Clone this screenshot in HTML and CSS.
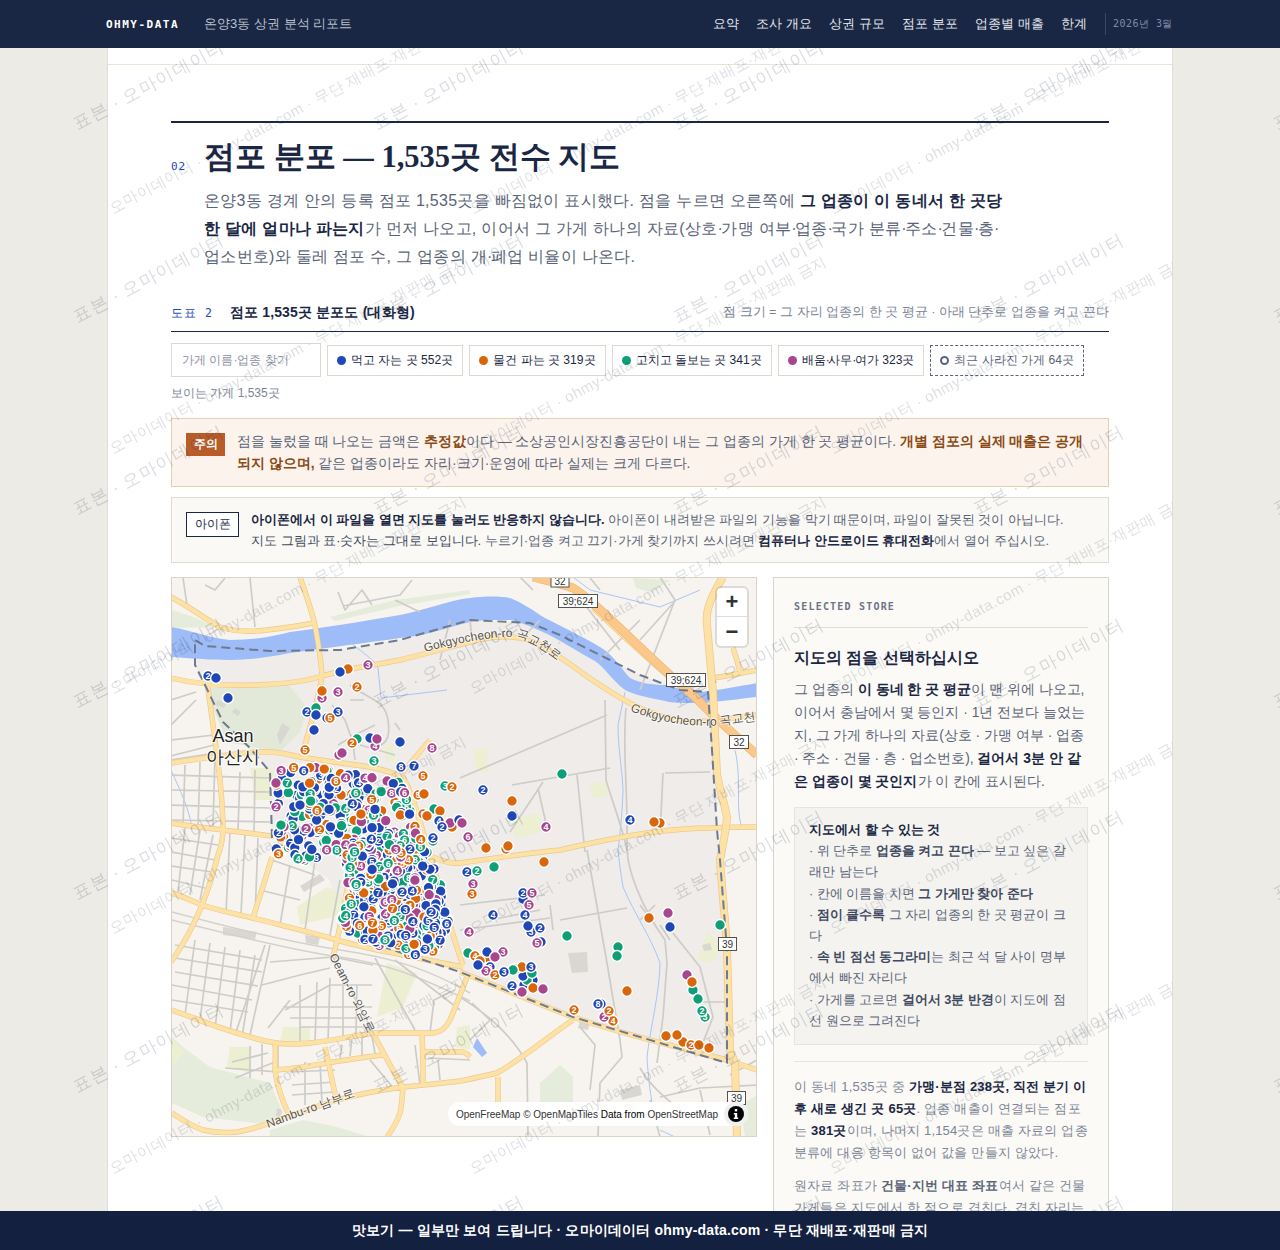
FILE: index.html
```html
<!DOCTYPE html>
<html lang="ko">
<head>
  <meta charset="UTF-8" />
  <meta name="viewport" content="width=device-width, initial-scale=1.0"/>
  <title>온양3동 상권 분석 리포트 - 점포 분포</title>
  <link rel="stylesheet" href="styles.css">
</head>
<body>
  <div class="topbar">
    <div class="topbar-left">
      <span class="brand">OHMY-DATA</span>
      <span class="report-name">온양3동 상권 분석 리포트</span>
    </div>
    <div class="topbar-right">
      <a href="#">요약</a>
      <a href="#">조사 개요</a>
      <a href="#">상권 규모</a>
      <a href="#">점포 분포</a>
      <a href="#">업종별 매출</a>
      <a href="#">한계</a>
      <span class="report-date">2026년 3월</span>
    </div>
  </div>

  <div class="watermark" id="wmOuter"></div>

  <div class="sheet">
    <div class="prev-end"></div>

    <div class="section">
      <div class="section-head">
        <span class="section-num">02</span>
        <h1>점포 분포 — 1,535곳 전수 지도</h1>
      </div>
      <p class="lead">온양3동 경계 안의 등록 점포 1,535곳을 빠짐없이 표시했다. 점을 누르면 오른쪽에 <strong>그 업종이 이 동네서 한 곳당 한 달에 얼마나 파는지</strong>가 먼저 나오고, 이어서 그 가게 하나의 자료(상호<i class="mid">·</i>가맹 여부<i class="mid">·</i>업종<i class="mid">·</i>국가 분류<i class="mid">·</i>주소<i class="mid">·</i>건물<i class="mid">·</i>층<i class="mid">·</i>업소번호)와 둘레 점포 수, 그 업종의 개<i class="mid">·</i>폐업 비율이 나온다.</p>

      <div class="fig-head">
        <div class="fig-title"><span class="fig-num">도표 2</span><strong>점포 1,535곳 분포도 (대화형)</strong></div>
        <div class="fig-note">점 크기 = 그 자리 업종의 한 곳 평균 · 아래 단추로 업종을 켜고 끈다</div>
      </div>

      <div class="filters">
        <input class="search" type="text" placeholder="가게 이름·업종 찾기">
        <button class="chip"><i class="dot dot-blue"></i>먹고 자는 곳 552곳</button>
        <button class="chip"><i class="dot dot-orange"></i>물건 파는 곳 319곳</button>
        <button class="chip"><i class="dot dot-green"></i>고치고 돌보는 곳 341곳</button>
        <button class="chip"><i class="dot dot-purple"></i>배움<i class="mid">·</i>사무<i class="mid">·</i>여가 323곳</button>
        <button class="chip chip-closed"><i class="dot dot-ring"></i>최근 사라진 가게 64곳</button>
      </div>
      <div class="count">보이는 가게 1,535곳</div>

      <div class="notice notice-warn">
        <span class="notice-tag">주의</span>
        <p>점을 눌렀을 때 나오는 금액은 <b>추정값</b>이다 — 소상공인시장진흥공단이 내는 그 업종의 가게 한 곳 평균이다. <b>개별 점포의 실제 매출은 공개되지 않으며,</b> 같은 업종이라도 자리·크기·운영에 따라 실제는 크게 다르다.</p>
      </div>
      <div class="notice notice-phone">
        <span class="notice-tag">아이폰</span>
        <p><strong>아이폰에서 이 파일을 열면 지도를 눌러도 반응하지 않습니다.</strong> 아이폰이 내려받은 파일의 기능을 막기 때문이며, 파일이 잘못된 것이 아닙니다.<br><span class="dim">지도 그림과 표·숫자는 그대로 보입니다.</span> 누르기·업종 켜고 끄기·가게 찾기까지 쓰시려면 <strong>컴퓨터나 안드로이드 휴대전화</strong>에서 열어 주십시오.</p>
      </div>

      <div class="map-row">
        <div class="map">
          <svg class="map-svg" viewBox="171 577 586 560" xmlns="http://www.w3.org/2000/svg">
            <defs>
              <path id="majors" d="M171 678C195 684 225 686 255 685C285 684 305 682 322 676C350 668 375 665 400 660C425 654 450 647 470 642C485 638 500 636 512 637C528 638 540 644 552 652C570 663 585 676 600 685C615 695 628 703 642 709C660 716 675 721 690 722C712 722 735 717 757 715
                M300 577C305 592 311 608 315 625C318 642 321 658 322 676C318 700 311 725 302 755
                M171 597C190 607 205 619 220 627C235 632 250 632 267 630C285 628 300 626 313 623
                M207 682C211 710 216 745 220 780C222 800 223 815 223 832C222 845 220 850 218 855C213 875 208 890 202 905C194 925 183 945 171 962
                M171 763C200 759 230 754 257 752C272 751 288 754 300 757C325 761 350 764 370 767C385 770 395 773 403 778C412 790 422 830 430 855C438 880 450 930 463 965
                M171 823C190 826 206 828 223 830C240 832 255 834 272 836
                M172 893C182 896 192 901 202 905C220 911 236 914 253 918C280 925 310 932 337 940C350 944 365 947 377 950C405 955 435 962 463 967
                M272 857C266 878 259 898 253 918
                M348 883C345 905 341 922 337 940C336 946 334 952 333 957
                M172 1010C195 1018 215 1027 237 1033C250 1037 262 1041 277 1043C288 1045 298 1044 310 1043C332 1041 352 1036 373 1033C392 1033 412 1033 433 1033C442 1032 446 1027 450 1020C456 1006 462 990 467 977
                M373 1033C382 1050 392 1070 403 1087
                M275 1045C276 1053 275 1062 275 1070C277 1086 282 1100 288 1113
                M275 1070C292 1069 309 1066 327 1063C346 1060 365 1057 383 1055
                M325 1047C329 1066 333 1085 337 1103
                M422 1035C423 1050 423 1065 423 1083
                M423 1052C435 1052 450 1052 463 1052C466 1053 468 1055 470 1057
                M172 1113C182 1120 192 1126 203 1130C215 1133 226 1133 237 1132C248 1130 259 1127 270 1123C292 1115 315 1107 337 1100C359 1094 381 1090 403 1087C425 1085 445 1083 460 1081C475 1078 488 1075 497 1073C525 1057 550 1035 573 1020
                M403 1087C402 1097 402 1105 400 1113C397 1122 392 1130 387 1137
                M498 1077L498 1103
                M733 648C736 656 738 664 740 672
                M460 972C495 985 535 1003 573 1017C625 1035 680 1048 727 1060L757 1070
                M430 856C445 862 452 864 460 863C495 858 530 853 560 850C590 843 620 837 647 833C670 830 690 828 710 828C725 827 742 827 757 827
                M593 608C615 628 640 652 667 675
                M713 678C728 676 742 673 757 670
                M403 772C412 762 421 750 430 740"/>
              <path id="lblA" d="M425 652C455 644 485 637 510 637C530 638 548 652 568 668"/>
              <path id="lblB" d="M630 711C660 722 690 728 720 725L765 719"/>
            </defs>

            <rect x="171" y="577" width="586" height="560" class="land"/>

            <path class="green" d="M172 610L196 618L215 627L172 628Z"/>
            <path class="green" d="M330 617L395 600L470 590L470 594L400 606L335 621Z"/>
            <path class="green" d="M633 578L670 580L652 593L636 588Z"/>
            <path class="green" d="M172 1037L183 1047L210 1067L270 1083L283 1113L270 1125L203 1117L172 1103Z"/>
            <path class="green" d="M270 1130L303 1120L337 1127L370 1137L270 1137Z"/>
            <path class="green" d="M540 1083L560 1065L573 1077L573 1102L540 1102Z"/>
            <path class="green" d="M740 1105L757 1095L757 1137L745 1137Z"/>

            <path class="boundary-fill" d="M195 640L205 646L270 651L340 650L400 640L470 620L530 623L560 635L610 660L640 675L680 690L708 692L712 750L717 830L720 860L727 950L727 1063L573 1017L460 972L363 940L340 925L330 880L272 838L270 772L250 748L223 722L205 685L195 665Z"/>

            <path class="park" d="M210 685L287 682L307 708L300 732L280 752L257 748L227 742L213 708Z"/>
            <path class="school" d="M250 768L273 768L272 800L255 800Z"/>
            <path class="school" d="M297 907L327 887L347 897L340 915L300 925Z"/>
            <path class="school" d="M377 1017L387 963L417 973L403 1007Z"/>
            <path class="school" d="M283 1027L310 1027L310 1042L280 1042Z"/>
            <path class="school" d="M230 1047L252 1047L250 1073L227 1067Z"/>
            <path class="school" d="M457 1027L470 1025L470 1050L455 1047Z"/>
            <path class="school" d="M697 960L707 933L723 943L713 963Z"/>
            <path class="school" d="M473 750L487 748L488 772L477 772Z"/>
            <path class="school" d="M590 783L608 782L607 797L593 798Z"/>
            <path class="school" d="M512 818L540 813L542 832L515 838Z"/>
            <path class="school" d="M384 745L392 743L395 760L386 762Z"/>
            <path class="school" d="M172 1040L184 1052L172 1066Z"/>

            <path class="building" d="M568 953L587 952L588 972L572 973Z"/>
            <path class="building" d="M223 927L257 932L255 939L223 935Z"/>
            <path class="building" d="M305 935L320 937L318 945L306 943Z"/>
            <path class="building" d="M280 745L290 728L282 723L277 735Z"/>
            <path class="building" d="M217 700L226 704L224 708L216 705Z"/>
            <path class="building" d="M235 708L241 712L238 716L232 712Z"/>
            <path class="building" d="M282 1110L277 1108L276 1116L281 1117Z"/>
            <path class="building" d="M620 1090L640 1085L642 1095L622 1100Z"/>
            <path class="building" d="M580 1020L590 1022L588 1030L578 1028Z"/>
            <path class="building" d="M702 945L710 943L712 950L704 951Z"/>
            <path class="building" d="M300 886L320 874L325 880L304 892Z"/>
            <path class="building" d="M336 835L350 828L350 838L340 843Z"/>

            <path class="water" d="M171 627C190 630 210 638 230 640C255 640 275 636 290 632C320 628 360 622 400 615C425 610 450 600 470 598C485 596 500 596 510 598C525 604 535 612 545 618C565 628 585 638 600 647C615 656 622 670 630 678C640 683 652 685 665 685C680 689 690 691 700 692C720 690 740 686 757 683L757 697C740 699 720 702 700 703C685 703 672 703 665 701C650 698 635 695 625 690C612 680 605 668 595 661C578 652 560 640 545 633C530 626 520 622 510 620C495 620 480 620 470 622C445 628 425 636 400 638C365 643 325 648 290 653C270 657 250 660 230 660C205 660 190 658 171 657Z"/>
            <path class="water" d="M473 1047L477 1038L487 1053L482 1057Z"/>
            <path class="stream" d="M350 642C365 655 375 660 378 668L381 698L447 690"/>
            <path class="stream" d="M625 692L618 725C618 750 623 775 623 792C622 815 620 835 618 850C620 870 622 880 623 887C635 915 650 935 660 963C660 990 650 1030 647 1057C648 1075 650 1090 652 1103"/>
            <path class="stream" d="M171 770C180 790 190 810 192 830"/>
            <path class="stream" d="M573 577L590 590L660 607L700 590"/>
            <path class="stream" d="M735 750C742 780 735 810 742 827"/>
            <path class="stream" d="M660 1130L675 1137"/>

            <path class="minor" d="M183 578L187 605M205 585L215 590L225 578M250 578L255 627M338 592L345 610L362 590L372 605M343 606L400 595L412 580M395 600L420 612M171 700L196 692M171 725L196 700M171 740L214 735M171 756L214 745M171 760L215 753"/>
            <path class="minor" d="M350 685C370 700 385 700 388 720C392 745 380 745 372 750M338 745L355 735L375 725M352 735L355 760M360 745L395 755M395 723L400 730M332 705L345 720L352 740M350 700L364 700"/>
            <path class="minor" d="M171 775L270 778M171 790L270 792M171 805L270 808M171 820L270 822M185 765L183 825M200 762L198 827M215 755L213 828M240 772L238 830M255 770L254 834"/>
            <path class="minor" d="M171 838L218 845M171 852L215 860M171 866L212 872M172 880L205 888M185 828L178 892M200 830L190 895M213 835L200 900M230 832L226 912M245 835L241 914M258 838L255 918M272 860L315 875M260 890L300 900M290 865L280 925M315 860L305 930M340 880L330 935"/>
            <path class="minor-wide" d="M172 912C220 925 290 942 340 950C395 958 430 970 470 993M172 920C220 932 290 950 340 957C395 965 425 980 470 1001"/>
            <path class="minor" d="M175 945L262 960M175 958L262 972M175 972L258 986M172 985L252 1000M172 1000L248 1012M195 940L185 1015M210 943L200 1020M225 947L215 1028M240 950L230 1032M255 955L242 1037M265 945L236 1032M270 945L250 1035"/>
            <path class="minor" d="M270 962L333 957L373 965M262 985L300 975L330 968M285 1010L330 985L372 985M268 1028L290 1000M300 985L300 1043M317 982L315 1042M330 978L328 1042M343 980L343 1038M357 985L356 1036M283 1007L372 1007M290 1018L372 1018M300 1027L370 1027"/>
            <path class="minor" d="M333 957L373 1032M340 1058L342 1045M350 1056L352 1038M362 1055L362 1037M375 1053L372 1036M305 1062L305 1105M320 1062L322 1103M290 1072L335 1070M292 1085L335 1082M292 1095L335 1092M235 1078L275 1062M232 1062L268 1053M250 1046L250 1078M262 1044L262 1075M278 1043L278 1070M225 1068L278 1072"/>
            <path class="minor" d="M395 960L460 1010M375 958L415 1030M430 1033L434 1000L455 990M415 1045L420 1085M428 1058L470 1060M438 1060L440 1080M370 1060L395 1090"/>
            <path class="minor" d="M460 778L607 715M605 700L606 780C615 810 625 835 628 855M626 708C622 750 628 780 627 850C628 870 640 905 665 940L667 963L663 1017L657 1063M512 785L610 768M543 782L510 832M538 788L547 828M577 775L585 852M665 773L710 772M663 773L660 835M587 850L607 963L620 1040"/>
            <path class="minor" d="M460 905L545 895M550 905L553 930M540 910L490 920M460 930L550 918M560 920L627 908M673 933L700 967L713 1017L700 1050M640 905L655 925M660 925L670 940M640 920L655 905M698 1002L727 1002"/>
            <path class="minor" d="M460 997C490 1015 515 1040 527 1063L528 1137M472 1003L490 1020L470 1040M580 1027L595 1045L590 1090M620 1040L622 1057L600 1083L598 1137M640 1068C650 1085 660 1095 700 1125M660 1097L700 1088L757 1085M700 1090L710 1135M730 1075L757 1060M650 1100L660 1137"/>
            <path class="minor" d="M440 660L450 620M533 590L520 577M585 605L620 650M676 600L640 640M600 660L640 620M590 578L600 590M660 577L675 600L640 690M470 620L472 640M520 640L540 620"/>

            <use href="#majors" class="road-case"/>
            <use href="#majors" class="road"/>

            <path class="motor-case" d="M533 577C545 580 560 583 573 588C600 605 650 660 693 695C715 718 738 738 757 755"/>
            <path class="motor" d="M533 577C545 580 560 583 573 588C600 605 650 660 693 695C715 718 738 738 757 755"/>
            <path class="road-case-wide" d="M723 577C712 595 705 610 707 625L713 692L717 775C720 790 725 805 727 818C726 830 723 845 720 860C723 900 726 930 727 950C728 985 729 1020 730 1050L735 1063L737 1137"/>
            <path class="road-wide" d="M723 577C712 595 705 610 707 625L713 692L717 775C720 790 725 805 727 818C726 830 723 845 720 860C723 900 726 930 727 950C728 985 729 1020 730 1050L735 1063L737 1137"/>

            <path class="boundary" d="M195 640L205 646L270 651L340 650L400 640L470 620L530 623L560 635L610 660L640 675L680 690L708 692L712 750L717 830L720 860L727 950L727 1063L573 1017L460 972L363 940M272 838L270 772L250 748L223 722L205 685L195 665L195 640"/>

            <text class="road-label"><textPath href="#lblA">Gokgyocheon-ro 곡교천로</textPath></text>
            <text class="road-label"><textPath href="#lblB">Gokgyocheon-ro 곡교천로</textPath></text>
            <text class="road-label" transform="translate(329 956) rotate(63)">Oeam-ro 외암로</text>
            <text class="road-label" transform="translate(268 1128) rotate(-20)">Nambu-ro 남부로</text>
            <text class="place-label" x="233" y="742">Asan</text>
            <text class="place-label" x="233" y="763">아산시</text>

            <g class="shield"><rect x="551" y="575" width="18" height="12"/><text x="560" y="585">32</text></g>
            <g class="shield"><rect x="558.500" y="594.500" width="39" height="13"/><text x="578" y="605">39;624</text></g>
            <g class="shield"><rect x="666.500" y="673.500" width="39" height="13"/><text x="686" y="684">39;624</text></g>
            <g class="shield"><rect x="729.500" y="735.500" width="19" height="13"/><text x="739" y="746">32</text></g>
            <g class="shield"><rect x="718.500" y="937.500" width="18" height="13"/><text x="727.500" y="948">39</text></g>
            <g class="shield"><rect x="727.500" y="1091.500" width="18" height="13"/><text x="736.500" y="1102">39</text></g>

            <g id="dots"></g>
          </svg>

          <div class="zoom-ctl">
            <button>+</button>
            <button>−</button>
          </div>
          <div class="attrib">
            <span>OpenFreeMap © OpenMapTiles <b>Data from</b> OpenStreetMap</span>
            <span class="attrib-i"><svg viewBox="0 0 16 16" width="16" height="16"><circle cx="8" cy="8" r="8" fill="#000"/><rect x="6.800" y="3" width="2.400" height="2.400" fill="#fff"/><path d="M5.800 7H9.200V11.500H10.200V13H5.800V11.500H6.800V8.500H5.800Z" fill="#fff"/></svg></span>
          </div>
        </div>

        <div class="side">
          <div class="side-label">SELECTED STORE</div>
          <h3>지도의 점을 선택하십시오</h3>
          <p class="side-text">그 업종의 <strong>이 동네 한 곳 평균</strong>이 맨 위에 나오고, 이어서 충남에서 몇 등인지 · 1년 전보다 늘었는지, 그 가게 하나의 자료(상호 · 가맹 여부 · 업종 · 주소 · 건물 · 층 · 업소번호), <strong>걸어서 3분 안 같은 업종이 몇 곳인지</strong>가 이 칸에 표시된다.</p>
          <div class="howto">
            <strong>지도에서 할 수 있는 것</strong><br>
            · 위 단추로 <b>업종을 켜고 끈다</b> — 보고 싶은 갈래만 남는다<br>
            · 칸에 이름을 치면 <b>그 가게만 찾아 준다</b><br>
            · <b>점이 클수록</b> 그 자리 업종의 한 곳 평균이 크다<br>
            · <b>속 빈 점선 동그라미</b>는 최근 석 달 사이 명부에서 빠진 자리다<br>
            · 가게를 고르면 <b>걸어서 3분 반경</b>이 지도에 점선 원으로 그려진다
          </div>
          <div class="side-foot">
            <p>이 동네 1,535곳 중 <strong>가맹·분점 238곳, 직전 분기 이후 새로 생긴 곳 65곳</strong>. 업종 매출이 연결되는 점포는 <strong>381곳</strong>이며, 나머지 1,154곳은 매출 자료의 업종 분류에 대응 항목이 없어 값을 만들지 않았다.</p>
            <p>원자료 좌표가 <b>건물·지번 대표 좌표</b>여서 같은 건물 가게들은 지도에서 한 점으로 겹친다. 겹친 자리는</p>
          </div>
        </div>
      </div>
    </div>
    <div class="watermark" id="wmInner"></div>
  </div>

  <div class="bottombar">맛보기 — 일부만 보여 드립니다 · 오마이데이터 ohmy-data.com · 무단 재배포·재판매 금지</div>

  <script src="app.js"></script>
</body>
</html>
```

FILE: styles.css
```css
* {
  box-sizing: border-box;
}

html, body {
  height: 100%;
  overflow: hidden;
}

body {
  margin: 0;
  padding: 0;
  font-family: "Liberation Sans", sans-serif;
  background-color: #ecebe6;
  color: #1a2744;
}

.topbar {
  position: fixed;
  top: 0;
  left: 0;
  right: 0;
  height: 48px;
  z-index: 10;
  background-color: #1a2744;
  padding: 0 107px 0 106px;
  display: flex;
  justify-content: space-between;
  align-items: center;
}

.topbar-left {
  display: flex;
  align-items: center;
  gap: 25px;
}

.brand {
  font-family: monospace;
  font-size: 11px;
  font-weight: bold;
  letter-spacing: 1.500px;
  color: #fff;
}

.report-name {
  font-size: 13px;
  color: #b9c0cd;
}

.topbar-right {
  display: flex;
  align-items: center;
  gap: 17.500px;
}

.topbar-right a {
  color: #e3e6ec;
  text-decoration: none;
  font-size: 12.600px;
}

.report-date {
  font-family: monospace;
  font-size: 10px;
  letter-spacing: 0.500px;
  color: #7f8aa3;
  border-left: 1px solid #3b4764;
  padding: 4px 0 4px 7px;
}

.watermark {
  position: absolute;
  top: 0;
  left: 0;
  right: 0;
  bottom: 0;
  overflow: hidden;
  pointer-events: none;
  z-index: 5;
}

#wmOuter {
  position: fixed;
}

.wm {
  position: absolute;
  white-space: nowrap;
  transform-origin: left bottom;
  transform: rotate(-28deg);
}

.wm-big {
  font-size: 17.500px;
  letter-spacing: 0.800px;
  color: rgba(26, 39, 68, 0.17);
}

.wm-small {
  font-size: 15px;
  letter-spacing: 0.500px;
  color: rgba(26, 39, 68, 0.15);
}

.sheet {
  position: relative;
  width: 1066px;
  height: 1250px;
  margin: 0 auto;
  padding-top: 48px;
  background-color: #fff;
  border-left: 1px solid #dedcd5;
  border-right: 1px solid #dedcd5;
  overflow: hidden;
}

.prev-end {
  height: 17px;
  border-bottom: 1px solid #e8e4da;
}

.section {
  padding: 56px 63px 0;
}

.section-head {
  display: flex;
  align-items: flex-end;
  border-top: 2px solid #1a2744;
  padding-top: 10px;
}

.section-num {
  width: 33px;
  font-family: monospace;
  font-size: 11px;
  letter-spacing: 1px;
  color: #2347b8;
  padding-bottom: 8px;
}

h1 {
  margin: 0;
  font-family: "Liberation Serif", serif;
  font-size: 30.500px;
  line-height: 48px;
  font-weight: bold;
  color: #1a2744;
}

.lead {
  margin: 6px 0 0 33px;
  max-width: 800px;
  font-size: 16px;
  letter-spacing: 0.280px;
  line-height: 28px;
  color: #5a6478;
}

.mid {
  font-style: normal;
  letter-spacing: -1.500px;
}

strong {
  color: #1a2744;
}

.fig-head {
  display: flex;
  justify-content: space-between;
  align-items: center;
  margin-top: 32px;
  padding-bottom: 9px;
  border-bottom: 1px solid #1a2744;
}

.fig-num {
  font-family: monospace;
  font-size: 11.500px;
  letter-spacing: 1px;
  color: #2347b8;
  margin-right: 17px;
}

.fig-title strong {
  font-size: 14px;
  letter-spacing: 0.150px;
}

.fig-note {
  font-size: 12.700px;
  color: #7c8596;
}

.filters {
  display: flex;
  align-items: center;
  gap: 6px;
  margin-top: 11px;
}

.search {
  width: 150px;
  height: 34px;
  padding: 0 10px;
  font-family: inherit;
  font-size: 12.200px;
  border: 1px solid #ddd9cf;
  background-color: #fff;
}

.search::placeholder {
  color: #8a92a1;
}

.chip {
  display: flex;
  align-items: center;
  height: 31px;
  padding: 0 9px;
  font-family: inherit;
  font-size: 12.100px;
  font-weight: 500;
  color: #1a2744;
  background-color: #fff;
  border: 1px solid #ddd9cf;
  white-space: pre;
}

.chip-closed {
  color: #5a6478;
  border: 1px dashed #5a6478;
  font-weight: 400;
}

.dot {
  width: 9px;
  height: 9px;
  margin-right: 5px;
  border-radius: 50%;
}

.dot-blue { background-color: #1f47b5; }
.dot-orange { background-color: #d9660a; }
.dot-green { background-color: #0f9f77; }
.dot-purple { background-color: #a8458f; }
.dot-ring { border: 2px solid #5a6478; }

.count {
  margin-top: 7px;
  font-size: 12px;
  line-height: 18px;
  color: #7c8596;
}

.notice {
  display: flex;
  align-items: flex-start;
  gap: 12px;
}

.notice p {
  margin: 0;
}

.notice-warn {
  margin-top: 16px;
  padding: 12px 14px 11px;
  background-color: #fbf3ec;
  border: 1px solid #e8cdaf;
  font-size: 13.750px;
  line-height: 22px;
  color: #5a6478;
}

.notice-warn b {
  color: #8a4a14;
}

.notice-warn .notice-tag {
  flex: none;
  margin-top: 2px;
  width: 39px;
  height: 23px;
  line-height: 23px;
  text-align: center;
  font-size: 12px;
  font-weight: bold;
  color: #fff;
  background-color: #b85c2a;
}

.notice-phone {
  margin-top: 10px;
  padding: 11px 14px;
  background-color: #faf9f5;
  border: 1px solid #e0dcd2;
  line-height: 21px;
  color: #5a6478;
  font-size: 12.900px;
}

.notice-phone .notice-tag {
  flex: none;
  margin-top: 3px;
  width: 53px;
  height: 25px;
  line-height: 23px;
  text-align: center;
  font-size: 12px;
  color: #1a2744;
  border: 1px solid #1a2744;
  background-color: #fff;
}

.dim {
  color: #3f4a60;
}

.map-row {
  display: flex;
  align-items: flex-start;
  gap: 16px;
  margin-top: 14px;
}

.map {
  position: relative;
  flex: none;
  width: 586px;
  height: 560px;
  border: 1px solid #d9d4c8;
  overflow: hidden;
}

.map-svg {
  display: block;
  width: 586px;
  height: 560px;
  margin: -1px;
}

.land { fill: #f7f4ef; }
.boundary-fill { fill: #efecea; }
.green { fill: #e6ecdb; }
.park { fill: #e3e9d8; }
.school { fill: #edefd3; }
.building { fill: #d9d7d2; }
.water { fill: #9dbcf8; }

.stream, .minor, .minor-wide, .road-case, .road, .motor, .motor-case,
.road-case-wide, .road-wide, .boundary {
  fill: none;
  stroke-linejoin: round;
}

.stream { stroke: #a9c6f5; stroke-width: 1; }
.minor { stroke: #cdccc8; stroke-width: 1.700; }
.minor-wide { stroke: #d2d1cd; stroke-width: 1.500; }
.road-case { stroke: #efc88e; stroke-width: 5.500; }
.road { stroke: #fde2a6; stroke-width: 4.200; }
.road-case-wide { stroke: #efc88e; stroke-width: 8; }
.road-wide { stroke: #fde2a6; stroke-width: 6.500; }
.motor-case { stroke: #f0b877; stroke-width: 9; }
.motor { stroke: #fcc88a; stroke-width: 7.500; }

.boundary {
  stroke: #6e7a90;
  stroke-width: 2;
  stroke-dasharray: 9 5;
}

.road-label {
  font-size: 12px;
  fill: #55534f;
  stroke: #fff;
  stroke-width: 2px;
  paint-order: stroke;
  stroke-opacity: 0.6;
}

.place-label {
  font-size: 18px;
  fill: #222;
  text-anchor: middle;
  stroke: #fff;
  stroke-width: 2px;
  paint-order: stroke;
}

.shield rect {
  fill: #fff;
  stroke: #55534f;
  stroke-width: 1;
}

.shield text {
  font-size: 10px;
  text-anchor: middle;
  fill: #333;
}

.pt {
  stroke: #fff;
  stroke-width: 1.500;
}

.pt-blue { fill: #1f47b5; }
.pt-orange { fill: #d9660a; }
.pt-green { fill: #0f9f77; }
.pt-purple { fill: #a8458f; }

.pt-num {
  font-size: 9px;
  font-weight: bold;
  fill: #fff;
  text-anchor: middle;
}

.zoom-ctl {
  position: absolute;
  top: 10px;
  right: 9px;
  width: 30px;
  display: flex;
  flex-direction: column;
  background-color: #fff;
  border-radius: 4px;
  box-shadow: 0 0 0 2px rgba(0, 0, 0, 0.1);
}

.zoom-ctl button {
  height: 29px;
  padding: 0;
  font-family: "Liberation Sans", sans-serif;
  font-size: 22px;
  font-weight: bold;
  line-height: 1;
  color: #333;
  background: none;
  border: 0;
}

.zoom-ctl button:first-child {
  border-bottom: 1px solid #ddd;
}

.attrib {
  position: absolute;
  right: 8px;
  bottom: 10px;
  height: 24px;
  padding-left: 8px;
  display: flex;
  align-items: center;
  gap: 6px;
  font-family: "Liberation Sans", sans-serif;
  font-size: 10px;
  color: #333;
  background-color: #fff;
  border-radius: 12px;
}

.attrib b {
  font-weight: normal;
  color: #000;
}

.attrib-i {
  display: flex;
  align-items: center;
  justify-content: center;
  width: 24px;
  height: 24px;
  border-radius: 50%;
  background-color: #f0f0f0;
}

.side {
  flex: 1;
  height: 760px;
  padding: 23px 20px;
  background-color: #fbfaf6;
  border: 1px solid #d9d4c8;
}

.side-label {
  font-family: monospace;
  font-size: 10px;
  font-weight: bold;
  letter-spacing: 1.200px;
  line-height: 12px;
  color: #6b7488;
  padding-bottom: 14px;
  border-bottom: 1px solid #e2ded4;
}

h3 {
  margin: 18px 0 8px;
  font-size: 15.500px;
  line-height: 24px;
  font-weight: bold;
  color: #1a2744;
}

.side-text {
  margin: 0;
  font-size: 13.800px;
  line-height: 23px;
  color: #5a6478;
}

.howto {
  margin-top: 14px;
  padding: 12px 14px;
  font-size: 12.700px;
  line-height: 21.200px;
  color: #5a6478;
  background-color: #f4f3f0;
  border: 1px solid #e8e5de;
}

.howto b {
  color: #3f4a60;
}

.side-foot {
  margin-top: 16px;
  padding-top: 14px;
  border-top: 1px solid #e8e5de;
  font-size: 13px;
  letter-spacing: 0.200px;
  line-height: 22px;
  color: #7c8596;
}

.side-foot p {
  margin: 0 0 11px;
}

.side-foot b {
  color: #5a6478;
}

.bottombar {
  position: fixed;
  left: 0;
  right: 0;
  bottom: 0;
  height: 39px;
  z-index: 10;
  background-color: #13203f;
  color: #fff;
  font-size: 14px;
  font-weight: bold;
  letter-spacing: 0.180px;
  line-height: 39px;
  text-align: center;
}
```

FILE: app.js
```js
// small seeded random so the dots land in the same places every time
let seed = 20260301;
function rnd() {
  seed = (seed + 0x6d2b79f5) | 0;
  let t = Math.imul(seed ^ (seed >>> 15), 1 | seed);
  t = (t + Math.imul(t ^ (t >>> 7), 61 | t)) ^ t;
  return ((t ^ (t >>> 14)) >>> 0) / 4294967296;
}

// watermarks
function addMarks(id, cls, text, startX, startY, stepX, stepY, offX, offY) {
  const box = document.getElementById(id);
  for (let y = startY; y < 1400; y += stepY) {
    for (let x = startX; x < 1400; x += stepX) {
      const el = document.createElement("span");
      el.className = "wm " + cls;
      el.textContent = text;
      el.style.left = (x - offX) + "px";
      el.style.top = (y - offY) + "px";
      box.appendChild(el);
    }
  }
}
addMarks("wmOuter", "wm-big", "표본 · 오마이데이터", 80, 135, 300, 192.5, 0, 24);
addMarks("wmInner", "wm-small", "오마이데이터 · ohmy-data.com · 무단 재배포·재판매 금지", 7, 217, 360, 240, 0, 18);

// stores on the map: x, y, kind, number on the dot
const kinds = ["blue", "orange", "green", "purple"];
const B = 0, O = 1, G = 2, P = 3;

const stores = [
  [208,676,B,2],[216,678,B],[228,698,B],[348,669,O],[340,672,B],[368,665,P,3],[357,687,O,2],
  [322,691,O],[338,692,P,3],[322,698,P,3],[316,708,G],[307,712,B,2],[338,712,B,3],[316,715,B],
  [327,718,B],[330,718,O,5],[314,730,B],[305,750,O,5],[357,739,G],[352,743,O,2],[370,738,B],
  [377,739,P],[375,746,P,4],[400,742,B],[342,753,P],[339,755,P],[374,761,G,3],[432,748,P,8],
  [401,767,B,8],[414,766,B,7],[423,776,O,5],[445,786,G,3],[452,787,O,2],[418,795,O,5],[424,794,O],
  [434,809,G],[440,811,O],[423,814,O,6],[427,816,O],[439,821,B,4],[459,820,B],[462,823,P],
  [450,823,P],[452,827,O],[442,827,B,2],[468,837,P,6],[433,838,B,2],[433,841,G,2],
  [562,774,G],[483,790,B,2],[512,801,O],[512,816,B],[546,827,P,4],[630,820,B,4],[660,823,O],[654,822,O],
  [486,848,O],[508,846,O],[506,849,O,3],[460,822,B],
  [544,862,O],[494,867,G],[467,872,B,2],[477,871,G,2],[473,884,P,3],[472,894,O,3],[523,893,B,2],
  [532,893,P,5],[523,899,B],[529,905,P,5],[493,915,B,4],[525,915,B,4],[469,932,P,4],[528,926,B],
  [540,928,B,2],[531,932,B,3],[567,936,G],[541,942,B],[537,943,P,5],[668,913,P],[649,918,O],
  [670,927,B],[720,925,G],[618,947,G],[617,956,G],[627,991,O],[687,975,P],[692,982,O],[693,990,G],
  [698,999,G],[705,1017,G,3],[702,1011,G,2],[574,1010,O,2],[598,1004,B,8],[601,1004,B,3],
  [609,1011,O,2],[604,1017,P,2],[613,1021,O,4],[666,1036,O],[677,1035,O],[683,1042,O],[691,1045,O,2],
  [699,1045,O],[709,1048,O],
  [468,953,G],[475,956,O,4],[480,961,O],[487,958,O],[487,952,B],[503,952,P,3],[495,957,P],[490,967,B,8],
  [486,971,P,3],[478,965,B],[495,975,O,2],[504,972,B,3],[513,970,G],[522,967,O],[516,969,O],
  [531,967,B,3],[532,973,G],[523,976,B],[533,980,B],[527,980,G],[524,985,B],[512,986,B,2],
  [522,992,P],[533,988,O],[543,989,P]
];

function inside(pts, x, y) {
  let hit = false;
  for (let i = 0, j = pts.length - 1; i < pts.length; j = i++) {
    const a = pts[i], b = pts[j];
    if ((a[1] > y) !== (b[1] > y) && x < (b[0] - a[0]) * (y - a[1]) / (b[1] - a[1]) + a[0]) hit = !hit;
  }
  return hit;
}

function scatter(pts, count, numRate) {
  let xs = pts.map(p => p[0]), ys = pts.map(p => p[1]);
  const x0 = Math.min(...xs), x1 = Math.max(...xs), y0 = Math.min(...ys), y1 = Math.max(...ys);
  let made = 0;
  while (made < count) {
    const x = x0 + rnd() * (x1 - x0), y = y0 + rnd() * (y1 - y0);
    if (!inside(pts, x, y)) continue;
    const r = rnd();
    const k = r < 0.42 ? B : r < 0.62 ? O : r < 0.82 ? G : P;
    stores.push(rnd() < numRate ? [x, y, k, 2 + Math.floor(rnd() * 7)] : [x, y, k]);
    made++;
  }
}

// west side is looser, the middle of the dong is packed
scatter([[273,772],[305,764],[345,772],[400,778],[412,815],[345,860],[310,862],[276,855]], 230, 0.35);
scatter([[345,845],[415,825],[438,875],[450,925],[432,960],[378,948],[340,930],[348,890]], 440, 0.65);
stores.sort((a, b) => a[1] === b[1] ? 0 : (a[0] + a[1] * 3) % 7 - 3);

const svgNS = "http://www.w3.org/2000/svg";
const g = document.getElementById("dots");
stores.forEach(s => {
  const c = document.createElementNS(svgNS, "circle");
  c.setAttribute("cx", s[0]);
  c.setAttribute("cy", s[1]);
  c.setAttribute("r", 5.4);
  c.setAttribute("class", "pt pt-" + kinds[s[2]]);
  g.appendChild(c);
  if (s[3]) {
    const t = document.createElementNS(svgNS, "text");
    t.setAttribute("x", s[0]);
    t.setAttribute("y", s[1] + 3.2);
    t.setAttribute("class", "pt-num");
    t.textContent = s[3];
    g.appendChild(t);
  }
});
```
